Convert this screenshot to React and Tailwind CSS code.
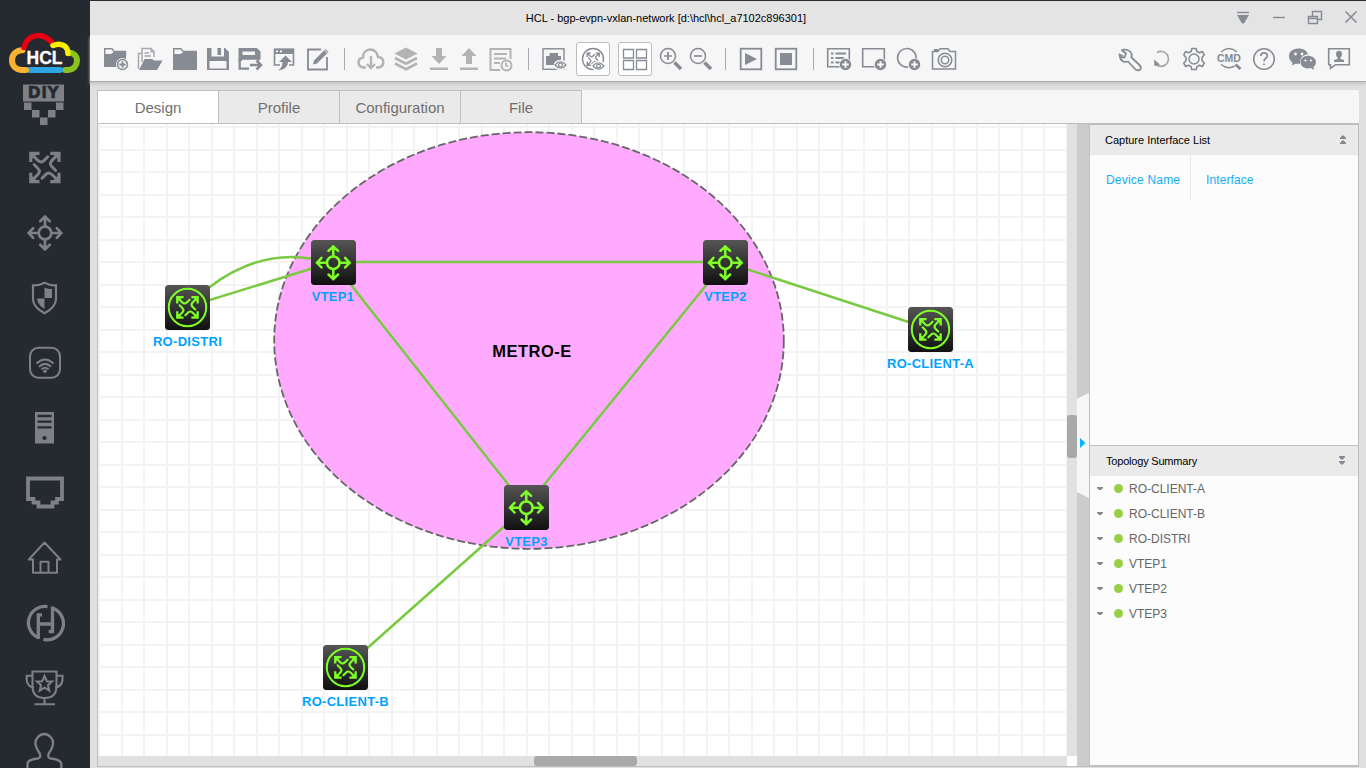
import React from "react";

const G = "#878b94";
const L = "#b3b3b3";
const S = "#7f8085";

function Icon({ className = "", children }) {
  return (
    <svg width="30" height="30" viewBox="0 0 30 30" fill="none" stroke={G} strokeWidth="1.7" className={"shrink-0 " + className}>
      {children}
    </svg>
  );
}

const Sep = ({ className }) => <div className={"h-[22px] w-px shrink-0 bg-[#a9abb0] " + className} />;

function RouterGlyph({ color, w = 3 }) {
  return (
    <g fill="none" stroke={color} strokeWidth={w}>
      {[0, 90, 180, 270].map((a) => (
        <g key={a} transform={`rotate(${a} 16 16)`}>
          <path d="M0 0H10.5V3.200H7L3.200 7V10.500H0Z" fill={color} stroke="none" />
          <path d="M3 3L8.500 8.500Q12 12 15 9L19 5" strokeLinecap="round" />
        </g>
      ))}
    </g>
  );
}

function SwitchGlyph({ color, w = 2.6 }) {
  return (
    <g fill="none" stroke={color} strokeWidth={w}>
      <circle r="6.3" />
      {[0, 90, 180, 270].map((a) => (
        <path key={a} d="M0-6.5V-16.5M-4.800-11.800L0-16.300 4.800-11.800" strokeLinecap="round" transform={`rotate(${a})`} />
      ))}
    </g>
  );
}

function Plus({ x, y, solid, r = 5.5 }) {
  return (
    <g transform={`translate(${x} ${y})`}>
      <circle r={r + 1} fill="#f6f6f6" stroke="none" />
      <circle r={r - 0.5} fill={solid ? G : "#f6f6f6"} stroke={G} strokeWidth="1.5" />
      <path d="M-3.2 0H3.2M0-3.2V3.2" stroke={solid ? "#fff" : G} strokeWidth="1.8" />
    </g>
  );
}

function Eye({ x, y, bg = "#f6f6f6" }) {
  return (
    <g transform={`translate(${x} ${y})`}>
      <ellipse rx="6.8" ry="5.2" fill={bg} stroke="none" />
      <path d="M-5.5 0Q0-6.5 5.5 0Q0 6.5-5.5 0Z" fill={bg} strokeWidth="1.2" />
      <circle r="1.9" strokeWidth="1.2" />
    </g>
  );
}

const sideIcons = [
  <g fill={S}>
    <path d="M23 14.500H64V31.500H23Z" />
    <text x="43.600" y="28.400" textAnchor="middle" fontSize="15.500" fontWeight="bold" letterSpacing=".6" fill="#252930" stroke="#252930" strokeWidth=".5" fontFamily="DejaVu Sans, sans-serif">DIY</text>
    <path d="M24 32.500h7.500V40H24ZM56 32.500h7.500V40H56ZM32 40h7.500v7.500H32ZM48 40h7.500v7.500H48ZM40 47.500h7.500V55H40Z" />
  </g>,
  <g transform="translate(29.2 16.8) scale(.98)"><RouterGlyph color={S} /></g>,
  <g transform="translate(45 33)"><SwitchGlyph color={S} w={2.7} /></g>,
  <g>
    <path d="M44.5 17.8Q51 21 56 20.3V34Q56 42 44.5 48.2Q33 42 33 34V20.3Q38 21 44.5 17.8Z" fill="none" stroke={S} strokeWidth="2.200" />
    <path d="M44.5 22.5Q48 24 52 24V33H44.5ZM37 33.5H44.5V44Q37.5 40 37 33.5Z" fill={S} />
  </g>,
  <g fill="none" stroke={S} strokeWidth="2">
    <rect x="30" y="17.8" width="30" height="30" rx="8.5" />
    <path d="M36.5 33.5Q45 25.5 53.5 33.5M39 36.8Q45 31 51 36.8M41.5 39.5Q45 36 48.5 39.5" />
    <circle cx="45" cy="41.3" r="1.8" fill={S} stroke="none" />
  </g>,
  <g>
    <path d="M35 17H54V48.5H35Z" fill={S} />
    <path d="M37.5 21H51.5M37.5 26.7H51.5M37.5 32.3H51.5" stroke="#252930" strokeWidth="2.3" />
    <circle cx="44.5" cy="43" r="2.1" fill="#252930" />
  </g>,
  <path d="M28 18.5H62V39H57V42.5H52.5V46.5H38.5V42.5H33.5V39H28Z" fill="none" stroke={S} strokeWidth="3.8" />,
  <path d="M33 34.5H28.8L44.5 17.5 60.5 34.5H57V47.7H33V34.5ZM40.5 47.5V36.7H48.5V47.5" fill="none" stroke={S} strokeWidth="2" strokeLinejoin="round" />,
  <g fill="none" stroke={S} strokeWidth="3.3">
    <path d="M47.5 16.6A16.3 16.3 0 0 0 38 47.5M43.5 49.4A16.3 16.3 0 0 0 53.5 18.5" />
    <path d="M42 24.8H38.3V49M38.3 34H52.5M52.5 16.5V41.5H48.7" />
  </g>,
  <g fill="none" stroke={S} strokeWidth="2.1">
    <path d="M32.5 16.5H56.5V31Q56.5 43 44.5 43Q32.5 43 32.5 31ZM32.5 20.7H26.7V25Q27.5 32 34 32.5M56.5 20.7H62.5V25Q61.5 32 55 32.5M44.5 43V49M34.5 49.2H55" />
    <path d="M44.5 21L46.8 26.2 52 26.5 48 30.2 49.2 35.5 44.5 32.7 39.8 35.5 41 30.2 37 26.5 42.2 26.2Z" />
  </g>,
  <path d="M27.5 49V43.5Q28 39.5 38 38.5Q41.5 37.5 39.5 33Q32.5 23 37.5 17.5Q40.5 14 44.3 14Q48 14 51 17.5Q56 23 49 33Q47 37.5 50.5 38.5Q60.5 39.5 61.3 43.5V49" fill="none" stroke={S} strokeWidth="2.3" />,
];

function Sidebar() {
  return (
    <aside className="flex h-full w-[90px] shrink-0 flex-col overflow-hidden bg-[#252930]">
      <svg width="90" height="70" viewBox="0 0 90 70" className="shrink-0 overflow-visible" fill="none" strokeLinecap="round">
        <path d="M65 70H68C74 69.5 77 65 77 60.5C77 56 73.5 53 69 52.5" stroke="#8cc220" strokeWidth="6" />
        <path d="M30 70H60" stroke="#2fa5e3" strokeWidth="6" />
        <path d="M26 70H22C16 70 12 66 12 60C12 54 17 50 22.500 50.200" stroke="#fbb231" strokeWidth="6" />
        <path d="M24 47.500C26 38 34 34.500 41 35.700C46 36.800 49 39 52 42.500" stroke="#e60012" strokeWidth="5.500" />
        <path d="M53 45.500C61 42 68 46 68 53.500" stroke="#fff000" strokeWidth="5.500" />
        <text x="26.500" y="64" fontSize="17.500" fontWeight="bold" fill="#fff" stroke="#fff" strokeWidth=".3" fontFamily="Liberation Sans, sans-serif">HCL</text>
      </svg>
      {sideIcons.map((icon, i) => (
        <svg key={i} width="90" height="65" viewBox="0 0 90 65" className="shrink-0">
          {icon}
        </svg>
      ))}
    </aside>
  );
}

function TitleBar() {
  return (
    <header className="flex h-[35px] shrink-0 items-center border-t border-[#252930] bg-[#e4e4e4]">
      <div className="w-[24px] shrink-0" />
      <h1 className="flex-1 whitespace-nowrap text-center text-[11px] leading-4 text-black">
        HCL - bgp-evpn-vxlan-network [d:\hcl\hcl_a7102c896301]
      </h1>
      <svg width="148" height="34" viewBox="1218 1 148 34" className="shrink-0" fill="none" stroke={G} strokeWidth="1.4">
        <path d="M1237 12.500H1249" />
        <path d="M1237 15H1249L1244 23.500H1242Z" fill={G} stroke="none" />
        <path d="M1273 17.500H1285" />
        <path d="M1308.500 16.500H1317.500V23.500H1308.500ZM1308.500 18.500H1317.500M1312.500 16V11.500H1321.500V19.500H1318" />
        <path d="M1345.500 11.500L1356.500 22.500M1356.500 11.500L1345.500 22.500" strokeWidth="1.600" />
      </svg>
    </header>
  );
}

function Toolbar() {
  return (
    <div className="relative z-10 flex h-[47px] shrink-0 items-center border-b border-[#adadad] bg-[#f6f6f6] pl-[11px] pt-[2px] shadow-[0_2px_3px_#c4c4c4]">
      <Icon>
        <path d="M3.700 4.700H11L13 7.500H24.500V11H3.700Z" fill="#f6f6f6" strokeWidth="1.400" />
        <path d="M3 10H10L13 8H25V23H3Z" fill={G} stroke="none" />
        <Plus x="21.500" y="20.500" />
      </Icon>
      <Icon className="ml-[4px]">
        <path d="M3.500 25V9.500H7M7 18V4.500H16L19 8V13M9.500 9H14M9.500 12H16" stroke="#a6a9b0" strokeWidth="1.500" />
        <path d="M16 4V8H20" stroke="#a6a9b0" strokeWidth="1.200" />
        <path d="M9.500 15H17L19 16.500H27.500L22 26H4Z" fill={G} stroke="none" />
      </Icon>
      <Icon className="ml-[5px]">
        <path d="M3.700 4.700H11L13 7.500H26.300V11H3.700Z" strokeWidth="1.400" />
        <path d="M3 10H10.500L13.500 8H27V26H3Z" fill={G} stroke="none" />
      </Icon>
      <Icon className="ml-[3px]">
        <path d="M4 4H22L26 8V26H4Z" fill={G} stroke="none" />
        <path d="M8.500 4H21V12.500H8.500ZM6.500 17H23.500V24.500H6.500Z" fill="#f6f6f6" stroke="none" />
        <path d="M14.500 4H18V11H14.500Z" fill={G} stroke="none" />
      </Icon>
      <Icon className="ml-[2px]">
        <path d="M14 24.700H4.700V15" strokeWidth="2.300" />
        <path d="M3.500 4H22L25.500 7.500V15L23.500 17H3.500ZM7.500 7.500V11H20V7.500Z" fill={G} fillRule="evenodd" stroke="none" />
        <path d="M7 16.500H22" stroke="#f6f6f6" strokeWidth="1.500" />
        <path d="M15 21H26M21.500 16.500L26 21 21.500 25.500" strokeWidth="2.500" />
      </Icon>
      <Icon className="ml-[4px]">
        <path d="M11 21H5.500V5.500H24.500V21H20" strokeWidth="1.600" />
        <path d="M5 4.500H25V10H5Z" fill={G} stroke="none" />
        <path d="M7 7.300H9M11 7.300H13" stroke="#fff" />
        <path d="M16.500 11.500L23 18H19Q19 25 9 26.500Q13.500 24 13.500 18H10Z" fill={G} stroke="none" />
      </Icon>
      <Icon className="ml-[4px]">
        <path d="M18 5.500H5V25.500H24V13" strokeWidth="1.800" />
        <path d="M10 20.500L11 16.500 22.500 5 25.500 8 14 19.500Z" fill={G} stroke="none" />
        <path d="M21.500 6L24.500 9" stroke="#f6f6f6" strokeWidth="1" />
      </Icon>
      <Sep className="ml-[11px]" />
      <Icon className="ml-[11px]">
        <path d="M10 23.500H7.500C1 22.500 1 14.500 7 13.500C7 3 21 3 22 13C29 13.500 29 22.500 22.500 23.500H20" stroke={L} strokeWidth="2.500" />
        <path d="M15 12V24M11 20L15 24 19 20" stroke={L} strokeWidth="2.300" />
      </Icon>
      <Icon className="ml-[5px]">
        <path d="M15 3.500L26.500 9.500 15 15.500 3.500 9.500Z" fill={L} stroke="none" />
        <path d="M4 14L15 19.700 26 14M4 19.500L15 25.200 26 19.500" stroke={L} strokeWidth="2.600" />
      </Icon>
      <Icon className="ml-[3px]">
        <path d="M12 4H18V12H22.500L15 20 7.500 12H12ZM6 23.500H24V26H6Z" fill={L} stroke="none" />
      </Icon>
      <Icon>
        <path d="M12 20H18V12H22.500L15 4 7.500 12H12ZM6 23.500H24V26H6Z" fill={L} stroke="none" />
      </Icon>
      <Icon className="ml-[2px]">
        <path d="M14 26H4.500V5H24.500V15M8 10H21M8 14.500H20M8 19H14" stroke={L} strokeWidth="2" />
        <circle cx="20.500" cy="21.500" r="5" fill="#f6f6f6" stroke={L} strokeWidth="2" />
        <path d="M20 18.500V22H22.500" stroke={L} />
      </Icon>
      <Sep className="ml-[12px]" />
      <Icon className="ml-[10px]">
        <rect x="4" y="4.800" width="21" height="20.500" strokeWidth="1.400" />
        <path d="M10.500 9H19V12H22V21H7V12H10.500Z" fill={G} stroke="none" />
        <Eye x="21.500" y="21" />
      </Icon>
      <div className="ml-[7px] flex h-[34px] w-[34px] shrink-0 items-center justify-center rounded-[3px] border border-[#bcbcbc] bg-white">
        <Icon>
          <circle cx="15" cy="15" r="10.500" strokeWidth="1.400" />
          <g transform="translate(8.500 8.500) scale(.42)"><RouterGlyph color={G} w={3.200} /></g>
          <Eye x="20.500" y="22" bg="#fff" />
        </Icon>
      </div>
      <div className="ml-[8px] flex h-[34px] w-[34px] shrink-0 items-center justify-center rounded-[3px] border border-[#bcbcbc] bg-white">
        <Icon>
          <path d="M3.500 5.500H13.500V14H3.500ZM16.500 5.500H26.500V14H16.500ZM3.500 16.500H13.500V25.500H3.500ZM16.500 16.500H26.500V25.500H16.500Z" strokeWidth="1.300" />
        </Icon>
      </div>
      <Icon className="ml-[4px]">
        <circle cx="12" cy="12" r="7.500" strokeWidth="1.500" />
        <path d="M8 12H16M12 8V16" />
        <path d="M18.500 18.500L25 25" strokeWidth="3.500" />
      </Icon>
      <Icon>
        <circle cx="12" cy="12" r="7.500" strokeWidth="1.500" />
        <path d="M8 12H16" />
        <path d="M18.500 18.500L25 25" strokeWidth="3.500" />
      </Icon>
      <Sep className="ml-[9px]" />
      <Icon className="ml-[10px]">
        <rect x="4.700" y="4.700" width="20.600" height="20.600" strokeWidth="1.800" />
        <path d="M9 9V21L21 15Z" fill={G} stroke="none" />
      </Icon>
      <Icon className="ml-[5px]">
        <rect x="4.700" y="4.700" width="20.600" height="20.600" strokeWidth="1.800" />
        <path d="M9 9H21V21H9Z" fill={G} stroke="none" />
      </Icon>
      <Sep className="ml-[12px]" />
      <Icon className="ml-[10px]">
        <path d="M16 22.700H3.700V4.700H25.300V16" strokeWidth="1.600" />
        <path d="M7 9.500H9.500M7 14H9.500M7 18.500H9.500M11.500 9.500H22M11.500 14H20M11.500 18.500H16" strokeWidth="1.800" />
        <Plus x="21.500" y="20.500" solid />
      </Icon>
      <Icon className="ml-[5px]">
        <path d="M16 22.700H3.700V4.700H25.300V16" strokeWidth="1.600" />
        <Plus x="21.500" y="20.500" solid />
      </Icon>
      <Icon className="ml-[5px]">
        <path d="M14 23A9.300 9.300 0 1 1 22 15.500" strokeWidth="1.600" />
        <Plus x="20.500" y="20.500" solid />
      </Icon>
      <Icon className="ml-[5px]">
        <path d="M3.500 7.500H9L11 4.800H19L21 7.500H26.500V25H3.500Z" strokeWidth="1.500" />
        <path d="M5 6H9" strokeWidth="2" />
        <circle cx="16" cy="16" r="6.800" strokeWidth="1.600" />
        <circle cx="16" cy="16" r="3.700" strokeWidth="1.500" />
      </Icon>
      <Icon className="ml-[156px]">
        <path d="M6.500 6L11 9.500 9.500 13.500 5 13M5 13C6 18 10 18.500 13 17.500L20.500 25.500Q24 27.500 25.500 25Q26.500 23 24.500 21L16.500 13.500C18 8 13 4.500 6.500 6M5 13L4.500 10.500L8 12" strokeWidth="1.800" strokeLinejoin="round" />
      </Icon>
      <Icon className="ml-[2px]">
        <path d="M10 8.500A7.500 7.500 0 1 1 9 20.500" stroke="#a3a5a9" strokeWidth="1.700" />
        <path d="M7 15.500L7.500 22 13 20.500Z" fill={G} stroke="none" />
      </Icon>
      <Icon className="ml-[2px]">
        <path d="M12.800 4.500H17.200L17.900 7.500 20.500 8.800 23.300 7.500 25.300 10.800 23 13.500V16.500L25.300 19.200 23.300 22.500 20.500 21.200 17.900 22.600 17.200 25.500H12.800L12.100 22.600 9.500 21.200 6.700 22.500 4.700 19.200 7 16.500V13.500L4.700 10.800 6.700 7.500 9.500 8.800 12.100 7.500Z" strokeWidth="1.600" strokeLinejoin="round" />
        <circle cx="15" cy="15" r="5" strokeWidth="1.500" />
      </Icon>
      <Icon className="ml-[5px]">
        <path d="M7 8Q15 1 23 8M7 20.500Q14 26 20.500 22" strokeWidth="1.500" />
        <text x="15" y="18.300" textAnchor="middle" fontFamily="Liberation Sans, sans-serif" fontSize="10.500" fontWeight="bold" fill={G} stroke="none">CMD</text>
        <path d="M21.500 20.500L26.500 25" strokeWidth="3" />
      </Icon>
      <Icon className="ml-[5px]">
        <circle cx="15" cy="15" r="10.300" strokeWidth="1.500" />
        <path d="M11.800 12Q11.800 8.800 15 8.800Q18.300 8.800 18.300 11.800Q18.300 13.500 16.500 14.500Q15 15.500 15 17.500M15 19.500V21.300" strokeWidth="1.700" />
      </Icon>
      <Icon className="ml-[8px]">
        <path d="M11.500 4.500C5 4.500 2 8.500 2 12Q2 16 5.500 18.500L4.800 21.500 8.500 19.800H13C12.500 13 17 10.500 21 10.500C20 6.500 16 4.500 11.500 4.500Z" fill={G} stroke="none" />
        <path d="M21 11.800C16 11.800 13.500 15 13.500 18C13.500 22.500 18 25.500 24 24L27 26L26.500 23Q29 21 29 18C28.500 14 25 11.800 21 11.800Z" fill={G} stroke="none" />
        <g fill="#f6f6f6" stroke="none"><circle cx="8.500" cy="10" r="1.400" /><circle cx="15" cy="10" r="1.400" /><circle cx="18.500" cy="16.500" r="1.100" /><circle cx="24" cy="16.500" r="1.100" /></g>
      </Icon>
      <Icon className="ml-[7px]">
        <path d="M4.700 4.700H25.300V20.700H11.500L6.500 24.500V20.700H4.700Z" strokeWidth="1.600" />
        <path d="M12 10Q12 6.800 15 6.800Q18 6.800 18 10Q18 12.500 16.500 13.700V15L20 16V18H10V16L13.500 15V13.700Q12 12.500 12 10Z" fill={G} stroke="none" />
      </Icon>
    </div>
  );
}

const nodes = [
  { name: "VTEP1", x: 310.5, y: 239.500, kind: "s" },
  { name: "VTEP2", x: 703, y: 239.500, kind: "s" },
  { name: "VTEP3", x: 504, y: 485, kind: "s" },
  { name: "RO-DISTRI", x: 165, y: 285.3, kind: "r" },
  { name: "RO-CLIENT-A", x: 908, y: 306.800, kind: "r" },
  { name: "RO-CLIENT-B", x: 323, y: 645.3, kind: "r" },
];

function Node({ name, x, y, kind }) {
  return (
    <div className="absolute flex w-[120px] flex-col items-center" style={{ left: x - 98 - 37.5, top: y - 124 }}>
      <svg width="45" height="45" viewBox="0 0 45 45">
        <defs>
          <linearGradient id={"g" + name} x1="0" y1="0" x2="0" y2="1">
            <stop offset="0" stopColor="#555" />
            <stop offset="1" stopColor="#101010" />
          </linearGradient>
        </defs>
        <rect width="45" height="45" rx="3.500" fill={`url(#g${name})`} />
        {kind === "s" ? (
          <g transform="translate(22.300 22.700)"><SwitchGlyph color="#7fff27" w={2.500} /></g>
        ) : (
          <g>
            <circle cx="22.500" cy="22.500" r="18.700" fill="none" stroke="#7fff27" strokeWidth="2" />
            <g transform="translate(11.100 11.100) scale(.71)"><RouterGlyph color="#7fff27" /></g>
          </g>
        )}
      </svg>
      <div className="mt-[3px] whitespace-nowrap text-[13px] font-bold leading-[18px] tracking-[0.300px] text-[#00a2ff]">{name}</div>
    </div>
  );
}

function Canvas() {
  const cols = Array.from({ length: 43 }, (_, k) => Math.round(120.5 + 22.5 * k)).filter((x) => x < 1067);
  const rows = Array.from({ length: 29 }, (_, k) => Math.round(126 + 22.5 * k)).filter((y) => y < 756);
  return (
    <div className="relative h-[632px] w-[969px] shrink-0 overflow-hidden bg-white">
      <svg width="969" height="632" viewBox="98 124 969 632" className="block">
        <g fill="#f3f3f3">
          <rect x="98" y="124" width="2" height="632" />
          {cols.map((x) => <rect key={x} x={x} y="124" width="2" height="632" />)}
          {rows.map((y) => <rect key={y} x="98" y={y} width="969" height="2" />)}
        </g>
        <ellipse cx="529" cy="340.500" rx="254.800" ry="208.300" fill="#ffaaff" stroke="#666" strokeWidth="1.800" strokeDasharray="8 3" />
        <g fill="none" stroke="#7ac943" strokeWidth="2.500">
          <path d="M333 262H725L526 507ZM725 262L930 329M333 262L187 307M526 507L345 668M209 287.500Q258 250 311 258.500" />
        </g>
      </svg>
      <div className="absolute left-[372px] top-[217px] w-[124px] text-center text-[16.500px] font-bold leading-[20px] tracking-[0.500px] text-black">METRO-E</div>
      {nodes.map((n) => <Node key={n.name} {...n} />)}
    </div>
  );
}

function PanelHead({ title, down }) {
  return (
    <div className={"flex h-[30px] shrink-0 items-center justify-between bg-[#eaeaea] pr-[11px] text-[11px] text-black " + (down ? "pl-[16px] tracking-[-0.200px]" : "pl-[15px]")}>
      <span>{title}</span>
      <svg width="9" height="10" viewBox="0 0 9 10" fill="#85888e">
        {down ? <path d="M1 0H7V1L4.800 3.500H3.200L1 1ZM1 5H7V6L4.800 8.500H3.200L1 6Z" /> : <path d="M2 4H8V3L5.800 .5H4.200L2 3ZM2 9H8V8L5.800 5.500H4.200L2 8Z" />}
      </svg>
    </div>
  );
}

function SidePanel() {
  return (
    <div className="flex w-[270px] shrink-0 flex-col border border-[#bfbfbf] bg-[#fcfcfc]">
      <PanelHead title="Capture Interface List" />
      <div className="flex h-[290px] shrink-0 items-start text-[12px] text-[#12aef5]">
        <div className="flex h-[45px] w-[101px] items-center border-r border-[#e8e8e8] pl-[16px] pt-[4px] tracking-[0.200px]">Device Name</div>
        <div className="flex h-[45px] items-center pl-[15px] pt-[4px] tracking-[0.100px]">Interface</div>
      </div>
      <div className="h-px shrink-0 bg-[#bfbfbf]" />
      <PanelHead title="Topology Summary" down />
      <ul className="flex flex-col text-[12px] text-[#666]">
        {["RO-CLIENT-A", "RO-CLIENT-B", "RO-DISTRI", "VTEP1", "VTEP2", "VTEP3"].map((n) => (
          <li key={n} className="flex h-[25px] items-center pl-[7px]">
            <svg width="6" height="3" viewBox="0 0 6 3" fill="#85888e"><path d="M0 0H6V1L4 3H2L0 1Z" /></svg>
            <span className="ml-[11px] mr-[6px] h-[9px] w-[9px] rounded-full bg-[#98d045]" />
            <span className="pt-[1px]">{n}</span>
          </li>
        ))}
      </ul>
    </div>
  );
}

export default function App() {
  return (
    <div className="flex h-[768px] w-[1366px] overflow-hidden bg-[#e0e0e0] font-['Liberation_Sans',Arial,sans-serif]">
      <Sidebar />
      <main className="flex min-w-0 flex-1 flex-col">
        <TitleBar />
        <Toolbar />
        <div className="ml-[7px] mt-[8px] flex h-[34px] w-[1262px] shrink-0 border-b border-l border-[#bfbfbf] bg-[#f6f6f6] text-[15px] text-[#707070]">
          {["Design", "Profile", "Configuration", "File"].map((t, i) => (
            <div key={t} className={"flex h-[33px] w-[121px] items-center justify-center border-r border-t border-[#bfbfbf] pt-[2px] " + (i === 0 ? "bg-white" : "bg-[#eaeaea]")}>
              {t}
            </div>
          ))}
        </div>
        <div className="ml-[7px] flex h-[643px] w-[1262px] shrink-0 border-b border-l border-[#bfbfbf]">
          <div className="flex w-[979px] shrink-0 flex-col bg-white">
            <div className="flex">
              <Canvas />
              <div className="flex w-[10px] flex-col bg-[#e1e1e1] pt-[291px]">
                <div className="h-[43px] rounded-[3px] bg-[#a9a9a9]" />
              </div>
            </div>
            <div className="h-[10px] w-[969px] bg-[#e1e1e1] pl-[436px]">
              <div className="h-[10px] w-[103px] rounded-[3px] bg-[#a9a9a9]" />
            </div>
          </div>
          <div className="w-[12px] shrink-0 bg-[#cccccc] pt-[269px]">
            <svg width="12" height="105" viewBox="0 0 12 105">
              <path d="M0 5.500L12 0V105L0 99Z" fill="#f6f6f6" />
              <path d="M3 45L8.500 50 3 55Z" fill="#00b4ff" />
            </svg>
          </div>
          <SidePanel />
        </div>
      </main>
    </div>
  );
}
